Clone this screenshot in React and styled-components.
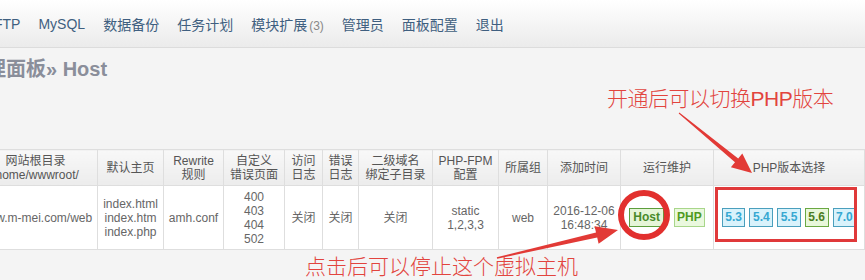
import React from "react";
import styled, { createGlobalStyle, css } from "styled-components";

const GlobalStyle = createGlobalStyle`
  html, body {
    margin: 0;
    padding: 0;
    background: #f4f4f4;
    overflow: hidden;
  }
  body {
    font-family: "Liberation Sans", Arial, "Noto Sans CJK SC", sans-serif;
  }
`;

const Page = styled.div`
  position: relative;
  width: 865px;
  height: 280px;
  overflow: hidden;
  background: #f4f4f4;
`;

const NavBar = styled.div`
  display: flex;
  align-items: center;
  gap: 18px;
  height: 47px;
  border-bottom: 1px solid #dcdcdc;
  background: linear-gradient(#ffffff, #ebebeb);
`;

const NavItem = styled.a`
  font-size: 14px;
  color: #3f5f80;
  white-space: nowrap;
  text-decoration: none;
  &:first-child {
    margin-left: -6px;
  }
`;

const Count = styled.span`
  font-size: 12px;
  color: #888;
  margin-left: 2px;
`;

const Title = styled.h1`
  margin: 9px 0 0 -34px;
  font-size: 20px;
  line-height: 24px;
  font-weight: bold;
  color: #8a8e9a;
  white-space: nowrap;
`;

const Note = styled.div`
  margin: ${(p) => p.$top}px 0 0 ${(p) => p.$left}px;
  font-size: ${(p) => p.$size}px;
  letter-spacing: ${(p) => p.$spacing || 0}px;
  line-height: 24px;
  font-weight: 300;
  color: #e2443e;
  white-space: nowrap;
`;

const Table = styled.table`
  margin: 38px 0 0 -27px;
  width: 891px;
  table-layout: fixed;
  border-collapse: collapse;
  background: #fff;
`;

const Th = styled.th`
  height: 35px;
  padding: 0;
  border: 1px solid #dedede;
  background: linear-gradient(#f8f8f8, #ececec);
  font-size: 12px;
  line-height: 14px;
  font-weight: normal;
  color: #555;
  text-align: center;
  vertical-align: middle;
  white-space: nowrap;
  overflow: hidden;
`;

const Td = styled.td`
  height: 63px;
  padding: 0;
  border: 1px solid #dedede;
  background: #fff;
  font-size: 12px;
  line-height: 14px;
  color: #666;
  text-align: center;
  vertical-align: middle;
  white-space: nowrap;
`;

const BadgeRow = styled.div`
  display: flex;
  justify-content: center;
  align-items: center;
  gap: ${(p) => p.$gap}px;
`;

const tones = {
  host: css`
    background: #e6f5d8;
    border-color: #5c9e3c;
    color: #4a8a2a;
  `,
  php: css`
    background: #eaf8de;
    border-color: #a8d68a;
    color: #4f9a22;
  `,
  blue: css`
    background: #d9f2fb;
    border-color: #4a9fbd;
    color: #36a8d2;
  `,
  green: css`
    background: #e8f7da;
    border-color: #6aa842;
    color: #4b7d22;
  `,
};

const Badge = styled.span`
  display: inline-block;
  box-sizing: border-box;
  height: 19px;
  line-height: 17px;
  padding: 0 ${(p) => p.$pad}px;
  border: 1px solid;
  font-size: 12px;
  font-weight: bold;
  ${(p) => tones[p.$tone]}
`;

const Overlay = styled.svg`
  position: absolute;
  left: 0;
  top: 0;
  pointer-events: none;
`;

const navItems = ["FTP", "MySQL", "数据备份", "任务计划", "模块扩展", "管理员", "面板配置", "退出"];

const columns = [
  { w: 124, head: ["网站根目录", "/home/wwwroot/"], body: ["www.m-mei.com/web"] },
  { w: 66, head: ["默认主页"], body: ["index.html", "index.htm", "index.php"] },
  { w: 60, head: ["Rewrite", "规则"], body: ["amh.conf"] },
  { w: 61, head: ["自定义", "错误页面"], body: ["400", "403", "404", "502"] },
  { w: 38, head: ["访问", "日志"], body: ["关闭"] },
  { w: 36, head: ["错误", "日志"], body: ["关闭"] },
  { w: 74, head: ["二级域名", "绑定子目录"], body: ["关闭"] },
  { w: 66, head: ["PHP-FPM", "配置"], body: ["static", "1,2,3,3"] },
  { w: 49, head: ["所属组"], body: ["web"] },
  { w: 73, head: ["添加时间"], body: ["2016-12-06", "16:48:34"] },
  { w: 93, head: ["运行维护"], body: "maint" },
  { w: 151, head: ["PHP版本选择"], body: "versions" },
];

const versions = [
  { v: "5.3", tone: "blue" },
  { v: "5.4", tone: "blue" },
  { v: "5.5", tone: "blue" },
  { v: "5.6", tone: "green" },
  { v: "7.0", tone: "blue" },
];

const lines = (arr) =>
  arr.map((t, i) => (
    <React.Fragment key={i}>
      {i > 0 && <br />}
      {t}
    </React.Fragment>
  ));

function cellBody(body) {
  if (body === "maint") {
    return (
      <BadgeRow $gap={10}>
        <Badge $tone="host" $pad={3}>Host</Badge>
        <Badge $tone="php" $pad={2}>PHP</Badge>
      </BadgeRow>
    );
  }
  if (body === "versions") {
    return (
      <BadgeRow $gap={4}>
        {versions.map((x) => (
          <Badge key={x.v} $tone={x.tone} $pad={2.5}>
            {x.v}
          </Badge>
        ))}
      </BadgeRow>
    );
  }
  return lines(body);
}

export default function App() {
  return (
    <Page>
      <GlobalStyle />
      <NavBar>
        {navItems.map((n) => (
          <NavItem key={n}>
            {n}
            {n === "模块扩展" && <Count>(3)</Count>}
          </NavItem>
        ))}
      </NavBar>

      <Title>管理面板» Host</Title>
      <Note $top={6} $left={607} $size={21} $spacing={-0.5}>开通后可以切换PHP版本</Note>

      <Table>
        <colgroup>
          {columns.map((c, i) => (
            <col key={i} style={{ width: c.w }} />
          ))}
        </colgroup>
        <thead>
          <tr>
            {columns.map((c, i) => (
              <Th key={i}>{lines(c.head)}</Th>
            ))}
          </tr>
        </thead>
        <tbody>
          <tr>
            {columns.map((c, i) => (
              <Td key={i}>{cellBody(c.body)}</Td>
            ))}
          </tr>
        </tbody>
      </Table>

      <Note $top={5} $left={305} $size={21}>点击后可以停止这个虚拟主机</Note>

      {/* red annotation marks drawn over the screenshot */}
      <Overlay width="865" height="280" viewBox="0 0 865 280">
        <polygon
          fill="#e23a36"
          points="678.7,113.4 735,162.2 730.9,167.2 752,173 742.3,153.4 738.2,158.4 679.3,112.6"
        />
        <polygon
          fill="#e23a36"
          points="497.2,258.7 597.2,237.4 598.6,243.8 618,230 594.6,226.2 596,232.6 496.8,257.3"
        />
        <ellipse cx="644" cy="215" rx="23" ry="22" fill="none" stroke="#e2302e" strokeWidth="6" />
        <rect x="716.5" y="188.5" width="139" height="52" fill="none" stroke="#e0393a" strokeWidth="3" />
      </Overlay>
    </Page>
  );
}
